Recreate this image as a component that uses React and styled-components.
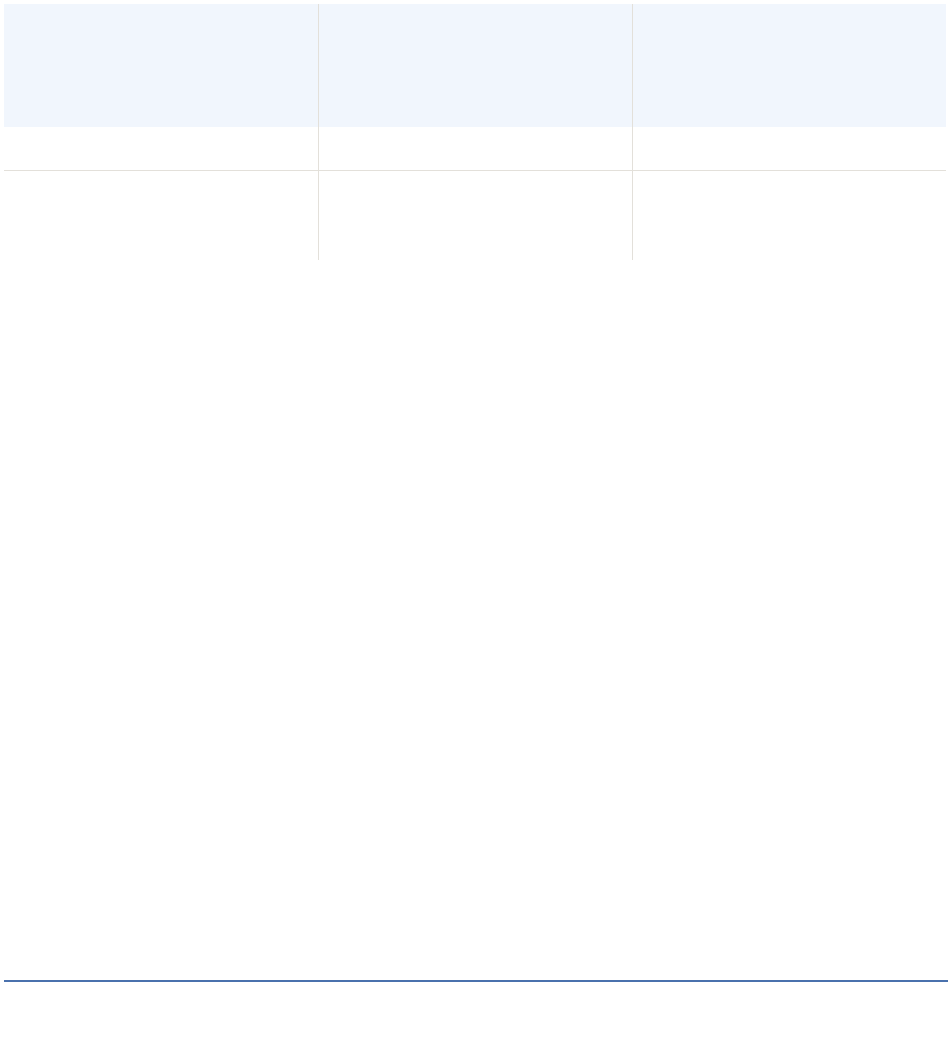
import React from "react";
import styled, { createGlobalStyle } from "styled-components";

const GlobalStyle = createGlobalStyle`
  body {
    margin: 0;
    background: #ffffff;
    font-family: "Liberation Sans", Arial, sans-serif;
  }
`;

const Page = styled.div`
  padding: 4px;
  display: flex;
  flex-direction: column;
`;

const Table = styled.div`
  width: 942px;
  display: grid;
  grid-template-columns: repeat(3, 1fr);
  grid-template-rows: 123px 44px 89px;
`;

const Cell = styled.div`
  background: ${(p) => (p.$head ? "#f1f6fd" : "#ffffff")};
  border-left: ${(p) => (p.$first ? "none" : "1px solid #e3e0da")};
  border-bottom: ${(p) => (p.$divider ? "1px solid #e3e0da" : "none")};
`;

const Footer = styled.div`
  margin-top: 720px;
  width: 944px;
  height: 2px;
  background: #4a71ad;
`;

const rows = [
  { head: true },
  { divider: true },
  {},
];

const App = () => {
  return (
    <>
      <GlobalStyle />
      <Page>
        <Table>
          {rows.map((row, r) =>
            [0, 1, 2].map((c) => (
              <Cell
                key={r + "-" + c}
                $head={row.head}
                $divider={row.divider}
                $first={c === 0}
              />
            ))
          )}
        </Table>
        <Footer />
      </Page>
    </>
  );
};

export default App;
